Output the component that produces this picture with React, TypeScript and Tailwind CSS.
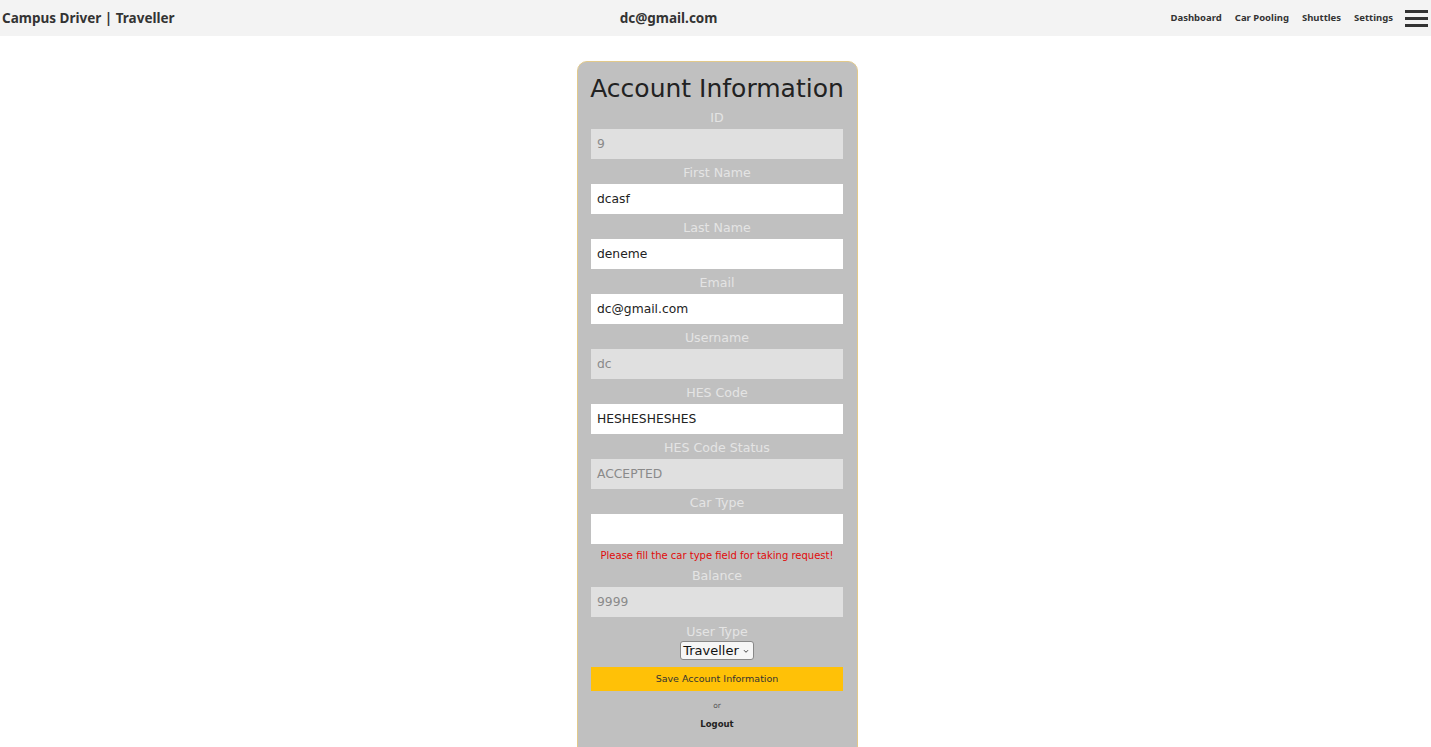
import React from 'react';

type Field = {
  label: string;
  value: string;
  disabled?: boolean;
};

const fields: Field[] = [
  { label: 'ID', value: '9', disabled: true },
  { label: 'First Name', value: 'dcasf' },
  { label: 'Last Name', value: 'deneme' },
  { label: 'Email', value: 'dc@gmail.com' },
  { label: 'Username', value: 'dc', disabled: true },
  { label: 'HES Code', value: 'HESHESHESHES' },
  { label: 'HES Code Status', value: 'ACCEPTED', disabled: true },
  { label: 'Car Type', value: '' },
];

const FieldRow: React.FC<{ field: Field }> = ({ field }) => (
  <div>
    <div className="h-[25px] pt-[4px] text-center text-[12.6px] leading-[20px] text-[#e4e4e4]">
      {field.label}
    </div>
    <div
      className={
        field.disabled
          ? 'h-[30px] px-[6px] flex items-center text-[12.3px] bg-[#e0e0e0] text-[#8a8a8a]'
          : 'h-[30px] px-[6px] flex items-center text-[12.3px] bg-white text-[#222]'
      }
    >
      {field.value}
    </div>
  </div>
);

export default function App() {
  return (
    <div className="min-h-screen bg-white" style={{ fontFamily: '"DejaVu Sans", sans-serif' }}>
      <header
        className="h-[36px] bg-[#f3f3f3] flex items-center justify-between pl-[2px] pr-[3px] text-[#333]"
        style={{ fontFamily: '"Noto Sans", sans-serif' }}
      >
        <div className="text-[13.5px] font-bold">Campus Driver | Traveller</div>
        <div className="text-[13.5px] font-bold pr-[8px]">dc@gmail.com</div>
        <nav className="flex items-center text-[9.5px] font-bold">
          <span className="mr-[13px]">Dashboard</span>
          <span className="mr-[13px]">Car Pooling</span>
          <span className="mr-[13px]">Shuttles</span>
          <span className="mr-[12px]">Settings</span>
          <div className="flex flex-col gap-[4px]">
            <div className="w-[23px] h-[3px] bg-[#333]" />
            <div className="w-[23px] h-[3px] bg-[#333]" />
            <div className="w-[23px] h-[3px] bg-[#333]" />
          </div>
        </nav>
      </header>

      <div className="flex justify-center pt-[25px] pl-[4px]">
        <div className="w-[281px] h-[700px] rounded-[10px] border border-[#e2c98a] bg-[#c0c0c0] pl-[13px] pr-[14px] pt-[11px]">
          <h1 className="whitespace-nowrap text-center text-[25px] leading-[31px] text-[#222] -mx-[6px]">
            Account Information
          </h1>
          {fields.map((f) => (
            <FieldRow key={f.label} field={f} />
          ))}
          <div className="h-[18px] pt-[6px] text-center text-[10px] leading-[12px] text-[#e00b0b] whitespace-nowrap">
            Please fill the car type field for taking request!
          </div>
          <FieldRow field={{ label: 'Balance', value: '9999', disabled: true }} />
          <div className="h-[24px] pt-[5px] text-center text-[12.6px] leading-[20px] text-[#e4e4e4]">User Type</div>
          <div className="flex justify-center">
            <div className="h-[19px] flex items-center gap-[4px] pl-[2px] pr-[4px] rounded-[3px] border border-[#888] bg-[#f6f6f6] text-[13px] text-[#111]">
              <span>Traveller</span>
              <svg width="6" height="5" viewBox="0 0 6 5" className="mt-[2px]">
                <path d="M1 1.2 L3 3.3 L5 1.2" fill="none" stroke="#444" strokeWidth="1" />
              </svg>
            </div>
          </div>
          <div className="mt-[7px] h-[24px] flex items-center justify-center bg-[#ffc107] text-[9.5px] text-[#333]">
            Save Account Information
          </div>
          <div className="mt-[9px] text-center text-[7.5px] text-[#555]">or</div>
          <div className="mt-[7px] text-center text-[8.5px] font-bold text-[#222]">Logout</div>
        </div>
      </div>
    </div>
  );
}
